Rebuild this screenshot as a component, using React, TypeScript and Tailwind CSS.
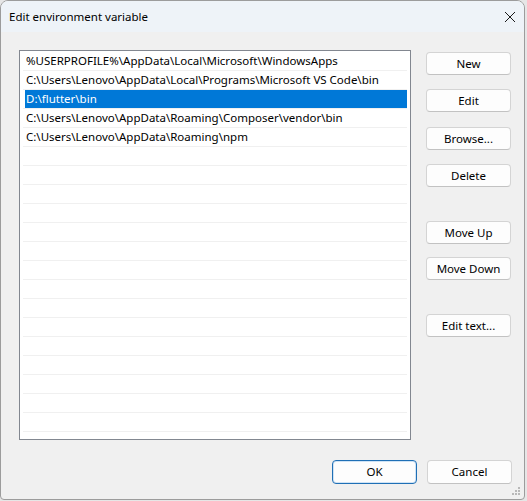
import React from "react";

const paths = [
  "%USERPROFILE%\\AppData\\Local\\Microsoft\\WindowsApps",
  "C:\\Users\\Lenovo\\AppData\\Local\\Programs\\Microsoft VS Code\\bin",
  "D:\\flutter\\bin",
  "C:\\Users\\Lenovo\\AppData\\Roaming\\Composer\\vendor\\bin",
  "C:\\Users\\Lenovo\\AppData\\Roaming\\npm",
];

const TOTAL_ROWS = 21;
const SELECTED = 2;

function Btn({ label, className = "", primary = false }: { label: string; className?: string; primary?: boolean }) {
  return (
    <button
      className={
        "w-[85px] h-[23px] shrink-0 rounded-[4px] text-[11.5px] text-black flex items-center justify-center " +
        (primary
          ? "bg-[#fdfdfd] border border-[#1f6fb5] shadow-[inset_0_0_0_1px_#cfe3f5] "
          : "bg-[#fdfdfd] border border-[#d4d4d4] border-b-[#c2c2c2] ") +
        className
      }
    >
      {label}
    </button>
  );
}

export default function App() {
  const rows = Array.from({ length: TOTAL_ROWS }, (_, i) => paths[i] ?? "");
  return (
    <div
      className="w-[527px] h-[501px] bg-[#e6e6e6] overflow-hidden"
      style={{ fontFamily: '"Noto Sans", "Open Sans", sans-serif' }}
    >
      <div className="w-[525px] h-[500px] border border-[#9c9c9c] rounded-t-[8px] rounded-b-[4px] overflow-hidden flex flex-col bg-[#f0f0f0]">
        {/* title bar */}
        <div className="h-[31px] shrink-0 bg-[#eef3f8] flex items-center justify-between pl-[8px] pr-[8px]">
          <span className="text-[11.5px] text-black leading-none">Edit environment variable</span>
          <svg width="12" height="12" viewBox="0 0 12 12" className="mt-[1px]">
            <path d="M1 1 L11 11 M11 1 L1 11" stroke="#1a1a1a" strokeWidth="1" fill="none" />
          </svg>
        </div>

        {/* body */}
        <div className="flex-1 relative pl-[18px] pr-[12px] pt-[18px]">
          <div className="flex">
            {/* path list */}
            <div className="w-[392px] h-[390px] shrink-0 bg-white border border-[#828790] overflow-hidden pt-[1px] px-[2px]">
              {rows.map((text, i) => (
                <div key={i} className="h-[19px] border-b border-[#f0f0f0] mx-[1px]">
                  <div
                    className={
                      "h-[18px] flex items-center pl-[1px] ml-[2px] text-[11.5px] whitespace-nowrap leading-none " +
                      (i === SELECTED ? "bg-[#0078d7] text-white" : "text-black")
                    }
                  >
                    {text}
                  </div>
                </div>
              ))}
            </div>

            {/* action buttons */}
            <div className="ml-[15px] flex flex-col pt-[2px]">
              <Btn label="New" />
              <Btn label="Edit" className="mt-[14px]" />
              <Btn label="Browse..." className="mt-[15px]" />
              <Btn label="Delete" className="mt-[14px]" />
              <Btn label="Move Up" className="mt-[34px]" />
              <Btn label="Move Down" className="mt-[13px]" />
              <Btn label="Edit text..." className="mt-[34px]" />
            </div>
          </div>

          {/* dialog buttons */}
          <div className="flex justify-end mt-[20px] gap-[10px]">
            <Btn label="OK" primary className="h-[24px]" />
            <Btn label="Cancel" className="h-[24px]" />
          </div>

          {/* resize grip */}
          <svg width="10" height="10" viewBox="0 0 10 10" className="absolute right-[3px] bottom-[3px]">
            <rect x="7" y="1" width="2" height="2" fill="#b8b8b8" />
            <rect x="4" y="4" width="2" height="2" fill="#b8b8b8" />
            <rect x="7" y="4" width="2" height="2" fill="#b8b8b8" />
            <rect x="1" y="7" width="2" height="2" fill="#b8b8b8" />
            <rect x="4" y="7" width="2" height="2" fill="#b8b8b8" />
            <rect x="7" y="7" width="2" height="2" fill="#b8b8b8" />
          </svg>
        </div>
      </div>
    </div>
  );
}
